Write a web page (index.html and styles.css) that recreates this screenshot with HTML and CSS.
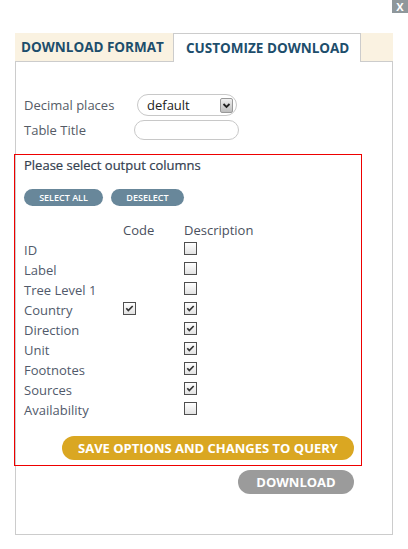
FILE: index.html
```html
<!DOCTYPE html>
<html>
<head>
<meta charset="utf-8">
<link rel="stylesheet" href="styles.css">
</head>
<body>
<div class="close">X</div>
<div class="dialog">
  <div class="tabs">
    <div class="tab tab-format">DOWNLOAD FORMAT</div>
    <div class="tab tab-active">CUSTOMIZE DOWNLOAD</div>
  </div>
  <div class="panel">
    <div class="form-row">
      <span class="label label-dec">Decimal places</span>
      <div class="select">
        <span class="select-text">default</span>
        <span class="select-arrow"><svg width="9" height="7" viewBox="0 0 9 7"><path d="M1.5 2 L4.5 5 L7.5 2" fill="none" stroke="#222" stroke-width="1.8"/></svg></span>
      </div>
    </div>
    <div class="form-row form-row-2">
      <span class="label label-title">Table Title</span>
      <div class="input"></div>
    </div>
    <div class="columns-box">
      <div class="box-title">Please select output columns</div>
      <div class="pills">
        <span class="pill pill-all">SELECT ALL</span>
        <span class="pill pill-none">DESELECT</span>
      </div>
      <div class="grid">
        <span class="cell"></span><span class="cell head">Code</span><span class="cell head">Description</span>

        <span class="cell">ID</span><span class="cell"></span><span class="cell"><span class="cb"></span></span>
        <span class="cell">Label</span><span class="cell"></span><span class="cell"><span class="cb"></span></span>
        <span class="cell">Tree Level 1</span><span class="cell"></span><span class="cell"><span class="cb"></span></span>
        <span class="cell">Country</span><span class="cell"><span class="cb"><svg width="11" height="11" viewBox="0 0 11 11"><path d="M2.3 5.3 L4.3 7.5 L8.7 3" fill="none" stroke="#333" stroke-width="1.7"/></svg></span></span><span class="cell"><span class="cb"><svg width="11" height="11" viewBox="0 0 11 11"><path d="M2.3 5.3 L4.3 7.5 L8.7 3" fill="none" stroke="#333" stroke-width="1.7"/></svg></span></span>
        <span class="cell">Direction</span><span class="cell"></span><span class="cell"><span class="cb"><svg width="11" height="11" viewBox="0 0 11 11"><path d="M2.3 5.3 L4.3 7.5 L8.7 3" fill="none" stroke="#333" stroke-width="1.7"/></svg></span></span>
        <span class="cell">Unit</span><span class="cell"></span><span class="cell"><span class="cb"><svg width="11" height="11" viewBox="0 0 11 11"><path d="M2.3 5.3 L4.3 7.5 L8.7 3" fill="none" stroke="#333" stroke-width="1.7"/></svg></span></span>
        <span class="cell">Footnotes</span><span class="cell"></span><span class="cell"><span class="cb"><svg width="11" height="11" viewBox="0 0 11 11"><path d="M2.3 5.3 L4.3 7.5 L8.7 3" fill="none" stroke="#333" stroke-width="1.7"/></svg></span></span>
        <span class="cell">Sources</span><span class="cell"></span><span class="cell"><span class="cb"><svg width="11" height="11" viewBox="0 0 11 11"><path d="M2.3 5.3 L4.3 7.5 L8.7 3" fill="none" stroke="#333" stroke-width="1.7"/></svg></span></span>
        <span class="cell">Availability</span><span class="cell"></span><span class="cell"><span class="cb"></span></span>
      </div>
      <div class="save-row">
        <span class="btn btn-save">SAVE OPTIONS AND CHANGES TO QUERY</span>
      </div>
    </div>
    <div class="download-row">
      <span class="btn btn-download">DOWNLOAD</span>
    </div>
  </div>
</div>
</body>
</html>
```
FILE: styles.css
```css
html, body {
  margin: 0;
  padding: 0;
}
body {
  width: 408px;
  height: 549px;
  position: relative;
  background: #fff;
  font-family: "Open Sans", "DejaVu Sans", sans-serif;
  overflow: hidden;
}
.close {
  position: absolute;
  top: 0;
  right: 0;
  width: 16px;
  height: 13px;
  background: #8e979b;
  color: #fff;
  font-weight: 700;
  font-size: 11px;
  line-height: 13px;
  text-align: center;
}
.dialog {
  margin: 33px 0 0 15px;
  width: 378px;
}
.tabs {
  display: flex;
  height: 28px;
  background: #faf2e1;
}
.tab {
  display: flex;
  align-items: center;
  box-sizing: border-box;
  font-weight: 700;
  font-size: 13.5px;
  color: #1d4e6c;
  white-space: nowrap;
}
.tab-format {
  width: 158px;
  height: 28px;
  padding-left: 6px;
}
.tab-active {
  width: 188px;
  height: 29px;
  padding-left: 12px;
  padding-bottom: 1px;
  background: #fff;
  border: 1px solid #ccc;
  border-bottom: none;
  position: relative;
  z-index: 1;
}
.panel {
  border: 1px solid #ccc;
  height: 474px;
  box-sizing: border-box;
  padding: 32px 0 0 8px;
}
.form-row {
  display: flex;
  align-items: center;
  height: 22px;
}
.form-row-2 {
  margin-top: 4px;
  height: 20px;
}
.label {
  font-size: 13px;
  color: #555b66;
}
.label-dec {
  width: 113px;
}
.label-title {
  width: 110px;
}
.select {
  width: 100px;
  height: 22px;
  box-sizing: border-box;
  border: 1px solid #c8c8c8;
  border-radius: 11px;
  display: flex;
  align-items: center;
  justify-content: space-between;
  padding: 0 3px 0 9px;
}
.select-text {
  font-size: 13px;
  color: #222;
}
.select-arrow {
  width: 13px;
  height: 15px;
  box-sizing: border-box;
  border: 1px solid #999;
  border-radius: 2px;
  background: linear-gradient(#f0f0f0, #bdbdbd);
  display: flex;
  align-items: center;
  justify-content: center;
}
.input {
  width: 105px;
  height: 20px;
  box-sizing: border-box;
  border: 1px solid #c8c8c8;
  border-radius: 10px;
}
.columns-box {
  margin: 14px 0 0 -10px;
  width: 348px;
  height: 312px;
  box-sizing: border-box;
  border: 1px solid #e00;
  padding: 1px 0 0 9px;
}
.box-title {
  font-size: 13px;
  font-weight: 500;
  line-height: 18px;
  color: #34404f;
  -webkit-text-stroke: 0.2px #34404f;
}
.pills {
  display: flex;
  gap: 8px;
  margin-top: 15px;
}
.pill {
  height: 17px;
  line-height: 17px;
  border-radius: 9px;
  background: #68879a;
  color: #fff;
  font-size: 9px;
  font-weight: 600;
  text-align: center;
}
.pill-all {
  width: 79px;
}
.pill-none {
  width: 73px;
}
.grid {
  display: grid;
  grid-template-columns: 99px 61px auto;
  grid-auto-rows: 20px;
  margin-top: 14px;
}
.cell {
  font-size: 13px;
  line-height: 20px;
  color: #515a6b;
  white-space: nowrap;
}
.head {
  color: #4a505e;
}
.cb {
  display: block;
  width: 13px;
  height: 13px;
  box-sizing: border-box;
  margin-top: 2px;
  border: 1px solid #4f4f4f;
  background: linear-gradient(#ffffff, #e2e2e2);
}
.cb svg {
  display: block;
}
.save-row {
  display: flex;
  justify-content: flex-end;
  margin: 16px 7px 0 0;
}
.download-row {
  display: flex;
  justify-content: flex-end;
  margin: 4px 38px 0 0;
}
.btn {
  height: 24px;
  line-height: 24px;
  border-radius: 12px;
  color: #fff;
  font-size: 13px;
  font-weight: 700;
  text-align: center;
  white-space: nowrap;
}
.btn-save {
  width: 292px;
  background: #daa722;
}
.btn-download {
  width: 116px;
  background: #9b9b9b;
}
```
